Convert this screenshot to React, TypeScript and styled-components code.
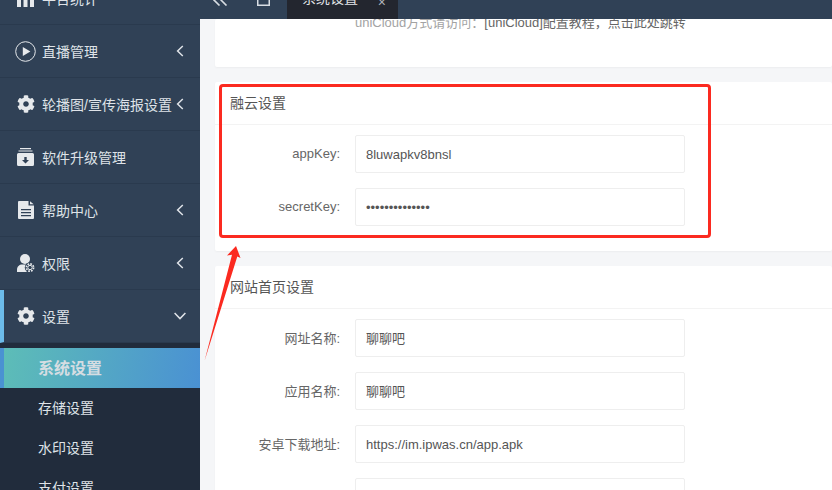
import React from 'react';
import styled, { createGlobalStyle } from 'styled-components';
import { FaCog } from 'react-icons/fa';

const fontStack = `"Liberation Sans", "Noto Sans CJK SC", sans-serif`;

const GlobalStyle = createGlobalStyle`
  html, body {
    margin: 0;
    padding: 0;
    height: 100%;
    overflow: hidden;
  }
  body {
    font-family: ${fontStack};
    font-size: 13px;
  }
`;

const Page = styled.div`
  position: relative;
  display: flex;
  width: 832px;
  height: 490px;
  overflow: hidden;
  background-color: #f5f6f8;
`;

/* ---------- sidebar ---------- */

const Sidebar = styled.aside`
  flex: 0 0 200px;
  height: 490px;
  overflow: hidden;
  background-color: #304156;
`;

const NavList = styled.div`
  margin-top: -28px;
`;

const NavItem = styled.div<{ $active?: boolean }>`
  display: flex;
  align-items: center;
  box-sizing: border-box;
  height: 53px;
  padding-left: 15px;
  padding-right: 14px;
  color: #dfe3e8;
  font-size: 14px;
  border-bottom: 1px solid #2a3a4e;
  border-left: ${(p) => (p.$active ? '4px solid #6cbbe9' : '0')};
  ${(p) => (p.$active ? 'padding-left: 11px;' : '')}
`;

const NavIcon = styled.span`
  display: flex;
  align-items: center;
  justify-content: center;
  flex: 0 0 21px;
  margin-right: 6px;
  font-size: 18px;
  color: #e6e9ec;
`;

const NavLabel = styled.span`
  flex: 1;
  white-space: nowrap;
`;

const NavArrow = styled.span`
  display: flex;
  justify-content: center;
  flex: 0 0 12px;
  color: #dfe3e8;
`;

const SubMenu = styled.div`
  padding-top: 5px;
  background-color: #212c3c;
`;

const SubItem = styled.div<{ $current?: boolean }>`
  display: flex;
  align-items: center;
  box-sizing: border-box;
  height: 40px;
  padding-bottom: 2px;
  padding-left: ${(p) => (p.$current ? '34px' : '38px')};
  color: #dfe3e8;
  font-size: ${(p) => (p.$current ? '16px' : '14px')};
  font-weight: ${(p) => (p.$current ? 700 : 400)};
  ${(p) =>
    p.$current
      ? `
    color: #d5dde2;
    border-left: 4px solid #4a92d2;
    background: linear-gradient(100deg, #5dbdb7 0%, #4a91d3 100%);
  `
      : ''}
`;

/* ---------- main column ---------- */

const Main = styled.main`
  flex: 1;
  min-width: 0;
  display: flex;
  flex-direction: column;
`;

const TopBar = styled.header`
  flex: 0 0 19px;
  display: flex;
  align-items: flex-start;
  overflow: hidden;
  background-color: #304156;
`;

const TopIcon = styled.span`
  display: flex;
  color: #d8dde3;
`;

const CollapseIcon = styled(TopIcon)`
  margin-left: 13px;
`;

const HomeIcon = styled(TopIcon)`
  margin-left: 29px;
`;

const ActiveTab = styled.div`
  display: flex;
  align-items: flex-start;
  justify-content: space-between;
  box-sizing: border-box;
  width: 111px;
  height: 19px;
  margin-left: 17px;
  padding: 0 12px 0 15px;
  background-color: #23262f;
  color: #e2e4e7;
  font-size: 14px;
  line-height: 14px;
`;

const TabText = styled.span`
  margin-top: -9px;
  white-space: nowrap;
`;

const TabClose = styled.span`
  margin-top: -5px;
  color: #aeb2b8;
  font-size: 14px;
`;

const Content = styled.div`
  flex: 1;
  display: flex;
  flex-direction: column;
  gap: 15px;
  padding-left: 15px;
  overflow: hidden;
`;

const Card = styled.section`
  flex: none;
  background-color: #fff;
  border-radius: 2px;
  box-shadow: 0 1px 2px rgba(0, 0, 0, 0.04);
`;

const HintCard = styled(Card)`
  height: 48px;
  overflow: hidden;
`;

const Hint = styled.p`
  margin: -6px 0 0 140px;
  font-size: 13px;
  line-height: 20px;
  color: #a3a3a3;
  white-space: nowrap;
`;

const HintLink = styled.span`
  color: #666;
`;

const CardTitle = styled.h3`
  margin: 0;
  box-sizing: border-box;
  height: 43px;
  padding-left: 15px;
  font-size: 14px;
  font-weight: 400;
  line-height: 42px;
  color: #555;
  border-bottom: 1px solid #f3f3f3;
`;

const CardBody = styled.div<{ $bottom?: number }>`
  display: flex;
  flex-direction: column;
  gap: 15px;
  padding: 10px 0 ${(p) => p.$bottom ?? 0}px;
`;

const FormRow = styled.label`
  display: flex;
  align-items: center;
  gap: 15px;
  height: 38px;
`;

const RowLabel = styled.span`
  flex: 0 0 125px;
  padding-bottom: 2px;
  text-align: right;
  font-size: 13px;
  color: #666;
  white-space: nowrap;
`;

const TextInput = styled.input<{ $cjk?: boolean }>`
  box-sizing: border-box;
  width: 330px;
  height: 38px;
  padding: 0 10px ${(p) => (p.$cjk ? '2px' : '0')};
  border: 1px solid #eeeeee;
  border-radius: 2px;
  outline: none;
  background-color: #fff;
  font-family: ${fontStack};
  font-size: 13px;
  color: #555;
`;

/* ---------- screenshot annotation ---------- */

const HighlightBox = styled.div`
  position: absolute;
  left: 219px;
  top: 84px;
  box-sizing: border-box;
  width: 492px;
  height: 154px;
  border: 3px solid #fb2a20;
  border-radius: 4px;
`;

const ArrowMark = styled.svg`
  position: absolute;
  left: 200px;
  top: 240px;
`;

type Field = { label: string; value?: string; type?: string; cjk?: boolean };

const rongFields: Field[] = [
  { label: 'appKey:', value: '8luwapkv8bnsl' },
  { label: 'secretKey:', value: '12345678901234', type: 'password' },
];

const siteFields: Field[] = [
  { label: '网址名称:', value: '聊聊吧', cjk: true },
  { label: '应用名称:', value: '聊聊吧', cjk: true },
  { label: '安卓下载地址:', value: 'https://im.ipwas.cn/app.apk' },
  { label: '', value: '' },
];

const PlayCircle = () => (
  <svg width="21" height="21" viewBox="0 0 21 21">
    <circle cx="10.5" cy="10.5" r="9.8" fill="none" stroke="currentColor" strokeWidth="1" />
    <path d="M7.8 5.9 L15.4 10.5 L7.8 15.1 Z" fill="currentColor" />
  </svg>
);

const ChartBars = () => (
  <svg width="17" height="18" viewBox="0 0 17 18">
    <path d="M0 10h4v8H0zM6.5 3h4v15h-4zM13 0h4v18h-4z" fill="currentColor" />
  </svg>
);

const ArchiveDown = () => (
  <svg width="17" height="18" viewBox="0 0 17 18">
    <path d="M3 0h11v1.2H3zM1.5 2.4h14v1.2h-14z" fill="currentColor" />
    <path
      d="M1.5 5h14A1.5 1.5 0 0 1 17 6.5v10a1.5 1.5 0 0 1-1.5 1.5h-14A1.5 1.5 0 0 1 0 16.5v-10A1.5 1.5 0 0 1 1.5 5z"
      fill="currentColor"
    />
    <path d="M7.3 9h2.4v3H12l-3.5 3.6L5 12h2.3z" fill="#304156" />
  </svg>
);

const PageLines = () => (
  <svg width="16" height="18" viewBox="0 0 16 18">
    <path
      d="M1 0h9.5v4.5H16V17a1 1 0 0 1-1 1H1a1 1 0 0 1-1-1V1a1 1 0 0 1 1-1zM12 .3 15.7 3.2H12z"
      fill="currentColor"
    />
    <path d="M3 8h10v1.2H3zM3 11h10v1.2H3zM3 14h10v1.2H3z" fill="#304156" />
  </svg>
);

const UserGear = () => (
  <svg width="18" height="18" viewBox="0 0 18 18">
    <circle cx="8" cy="5" r="5" fill="currentColor" />
    <path d="M0 18v-2.5C0 12.5 2.5 10.5 5 10.5h6c2 0 3.5 1.5 4 3.5v4z" fill="currentColor" />
    <circle cx="13" cy="13.5" r="5.2" fill="#304156" />
    <circle
      cx="13"
      cy="13.5"
      r="3.6"
      fill="none"
      stroke="currentColor"
      strokeWidth="1.7"
      strokeDasharray="1.7 1.1"
    />
    <circle cx="13" cy="13.5" r="2.2" fill="none" stroke="currentColor" strokeWidth="1" />
  </svg>
);

const ChevronLeft = () => (
  <svg width="8" height="12" viewBox="0 0 8 12">
    <path d="M6.8 1 1.6 6l5.2 5" fill="none" stroke="currentColor" strokeWidth="1.5" />
  </svg>
);

const ChevronDown = () => (
  <svg width="12" height="8" viewBox="0 0 12 8">
    <path d="M.6 1 6 6.6 11.4 1" fill="none" stroke="currentColor" strokeWidth="1.5" />
  </svg>
);

const navItems = [
  { label: '平台统计', icon: <ChartBars /> },
  { label: '直播管理', icon: <PlayCircle />, arrow: true },
  { label: '轮播图/宣传海报设置', icon: <FaCog />, arrow: true },
  { label: '软件升级管理', icon: <ArchiveDown /> },
  { label: '帮助中心', icon: <PageLines />, arrow: true },
  { label: '权限', icon: <UserGear />, arrow: true },
];

const FieldRows = ({ fields }: { fields: Field[] }) => (
  <>
    {fields.map((f, i) => (
      <FormRow key={i}>
        <RowLabel>{f.label}</RowLabel>
        <TextInput $cjk={f.cjk} type={f.type ?? 'text'} defaultValue={f.value} readOnly />
      </FormRow>
    ))}
  </>
);

const App = () => {
  return (
    <Page>
      <GlobalStyle />
      <Sidebar>
        <NavList>
          {navItems.map((item) => (
            <NavItem key={item.label}>
              <NavIcon>{item.icon}</NavIcon>
              <NavLabel>{item.label}</NavLabel>
              {item.arrow && (
                <NavArrow>
                  <ChevronLeft />
                </NavArrow>
              )}
            </NavItem>
          ))}
          <NavItem $active>
            <NavIcon>
              <FaCog />
            </NavIcon>
            <NavLabel>设置</NavLabel>
            <NavArrow>
              <ChevronDown />
            </NavArrow>
          </NavItem>
          <SubMenu>
            <SubItem $current>系统设置</SubItem>
            <SubItem>存储设置</SubItem>
            <SubItem>水印设置</SubItem>
            <SubItem>支付设置</SubItem>
          </SubMenu>
        </NavList>
      </Sidebar>
      <Main>
        <TopBar>
          <CollapseIcon>
            {/* only the lower half of the icon shows, the rest is scrolled away */}
            <svg width="15" height="6" viewBox="0 0 15 6">
              <path d="M0 -1 6.5 5.5M7 -1 13.5 5.5" fill="none" stroke="currentColor" strokeWidth="1.6" />
            </svg>
          </CollapseIcon>
          <HomeIcon>
            <svg width="13" height="6" viewBox="0 0 13 6">
              <path d="M.75 0v5.25h11.5V0" fill="none" stroke="currentColor" strokeWidth="1.5" />
            </svg>
          </HomeIcon>
          <ActiveTab>
            <TabText>系统设置</TabText>
            <TabClose>×</TabClose>
          </ActiveTab>
        </TopBar>
        <Content>
          <HintCard>
            <Hint>
              uniCloud方式请访问：<HintLink>[uniCloud]配置教程，点击此处跳转</HintLink>
            </Hint>
          </HintCard>
          <Card>
            <CardTitle>融云设置</CardTitle>
            <CardBody $bottom={25}>
              <FieldRows fields={rongFields} />
            </CardBody>
          </Card>
          <Card>
            <CardTitle>网站首页设置</CardTitle>
            <CardBody>
              <FieldRows fields={siteFields} />
            </CardBody>
          </Card>
        </Content>
      </Main>
      <HighlightBox />
      <ArrowMark width="45" height="125" viewBox="0 0 45 125">
        <path d="M36 6 L40.5 18 L37.3 16.6 L4.5 121 L32 14.8 L27 15.5 Z" fill="#fb2a20" />
      </ArrowMark>
    </Page>
  );
};

export default App;
